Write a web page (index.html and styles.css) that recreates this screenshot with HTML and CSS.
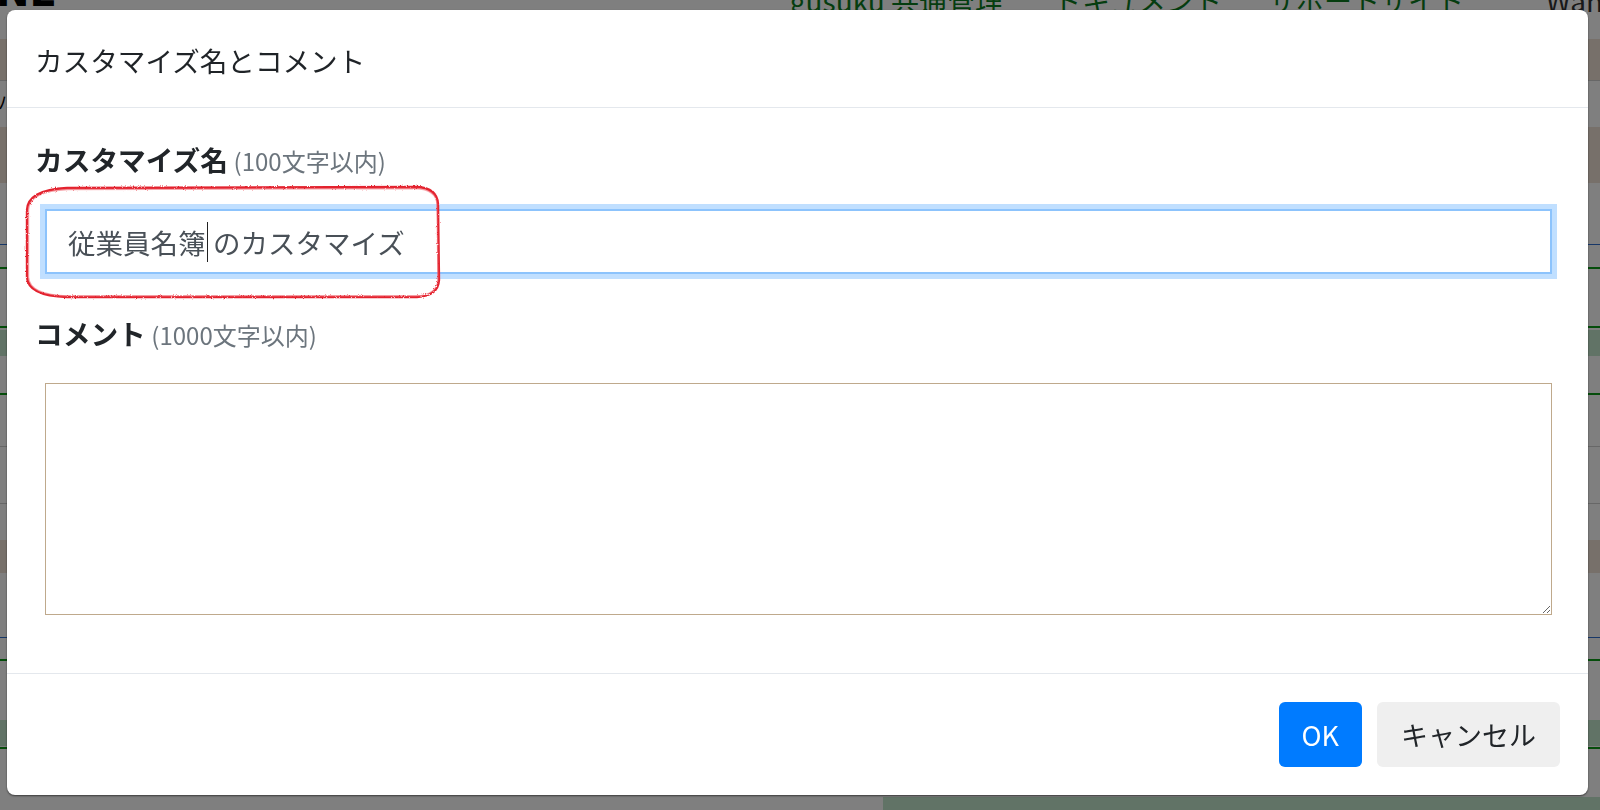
FILE: index.html
```html
<!DOCTYPE html>
<html lang="ja">
<head>
<meta charset="utf-8">
<title>カスタマイズ名とコメント</title>
<link rel="stylesheet" href="styles.css">
</head>
<body>
<div class="page">
  <header class="topbar">
    <div class="logo">NE</div>
    <nav class="nav">
      <a class="nav-link">gusuku 共通管理</a>
      <a class="nav-link">ドキュメント</a>
      <a class="nav-link">サポートサイト</a>
      <span class="nav-user">Wan</span>
    </nav>
  </header>
  <div class="rows">
    <div class="row row-a beige line-gray"></div>
    <div class="row row-b"><span class="row-text">パ</span></div>
    <div class="row row-c beige"></div>
    <div class="row row-d line-blue"></div>
    <div class="row row-e line-green"></div>
    <div class="row row-f line-green"></div>
    <div class="row row-g line-green"><span class="band band-g"></span></div>
    <div class="row row-h line-gray"></div>
    <div class="row row-i line-gray"></div>
    <div class="row row-j"></div>
    <div class="row row-k beige"></div>
    <div class="row row-l line-blue"></div>
    <div class="row row-m line-green"></div>
    <div class="row row-n line-green"><span class="band band-n"></span></div>
    <div class="row row-o"></div>
    <div class="row row-p"><span class="band band-p"></span></div>
  </div>
</div>

<div class="overlay">
  <div class="modal">
    <div class="modal-header">
      <h5 class="modal-title">カスタマイズ名とコメント</h5>
    </div>
    <div class="modal-body">
      <div class="form-group">
        <label class="label"><span class="label-main">カスタマイズ名</span> <span class="label-note">(100文字以内)</span></label>
        <div class="input is-focused"><span>従業員名簿</span><span class="caret"></span><span>のカスタマイズ</span></div>
      </div>
      <div class="form-group">
        <label class="label"><span class="label-main">コメント</span> <span class="label-note">(1000文字以内)</span></label>
        <textarea class="textarea"></textarea>
      </div>
    </div>
    <div class="modal-footer">
      <button class="btn btn-primary">OK</button>
      <button class="btn btn-light">キャンセル</button>
    </div>
    <svg class="annotation" width="430" height="126" viewBox="0 0 430 126">
      <defs>
        <filter id="rough" x="-5%" y="-5%" width="110%" height="110%">
          <feTurbulence type="fractalNoise" baseFrequency="0.9" numOctaves="2" seed="3" result="n"/>
          <feDisplacementMap in="SourceGraphic" in2="n" scale="2.5"/>
        </filter>
      </defs>
      <path filter="url(#rough)" d="M 47 8 L 397 7 Q 417 8 418 24 L 419 100 Q 418 116 397 117 L 47 117 Q 8 116 7 97 L 7 30 Q 8 10 47 8 Z" fill="none" stroke="#e3232f" stroke-width="2.4"/>
      <path filter="url(#rough)" d="M 48 9.5 L 396 8.5 Q 416 9.5 417 24 L 418 100 Q 417 115 396 116 L 48 116 Q 9.5 115 8.5 97 L 8.5 30 Q 9.5 11 48 9.5 Z" fill="none" stroke="#f0606a" stroke-width="1.4" opacity="0.55"/>
    </svg>
  </div>
</div>
</body>
</html>
```

FILE: styles.css
```css
* {
  box-sizing: border-box;
}

html,
body {
  margin: 0;
  padding: 0;
}

body {
  width: 1600px;
  height: 810px;
  overflow: hidden;
  background: #ffffff;
  font-family: "Noto Sans CJK JP", "Noto Sans", sans-serif;
  color: #212529;
}

/* ---------- background page ---------- */
.page {
  width: 1600px;
  height: 810px;
  display: flex;
  flex-direction: column;
}

.topbar {
  height: 39px;
  display: flex;
  align-items: flex-start;
  justify-content: space-between;
  overflow: hidden;
}

.logo {
  font-family: "DejaVu Sans", sans-serif;
  font-weight: 700;
  font-size: 40px;
  line-height: 40px;
  margin-top: -28px;
  margin-left: -4px;
  color: #000;
}

.nav {
  display: flex;
  gap: 46px;
  margin-top: -14px;
  margin-right: -3px;
  font-size: 28px;
  line-height: 28px;
}

.nav-link {
  color: #0b7a1e;
}

.nav-link:first-child {
  margin-right: 5px;
}

.nav-user {
  color: #333;
  margin-left: 36px;
}

.rows {
  display: flex;
  flex-direction: column;
}

.row {
  position: relative;
  flex: none;
}

.beige {
  background: #efe1d4;
}

.line-gray {
  border-bottom: 1px solid #cfcfcf;
}

.line-blue {
  border-bottom: 1px solid #2f6fd0;
}

.line-green {
  border-bottom: 2px solid #0a9a16;
}

.row-a { height: 42px; }
.row-b { height: 46px; }
.row-c { height: 56px; }
.row-d { height: 62px; }
.row-e { height: 24px; }
.row-f { height: 59px; }
.row-g { height: 67px; }
.row-h { height: 52px; }
.row-i { height: 57px; }
.row-j { height: 36px; }
.row-k { height: 33px; }
.row-l { height: 65px; }
.row-m { height: 23px; }
.row-n { height: 88px; }
.row-o { height: 48px; }
.row-p { height: 13px; }

.row-text {
  display: block;
  margin-left: -2px;
  padding-top: 10px;
  font-size: 18px;
  line-height: 20px;
  color: #000;
}

.band {
  display: block;
  background: #c2e6cc;
}

.band-g {
  margin-top: 2px;
  height: 26px;
}

.band-n {
  margin-top: 59px;
  height: 26px;
}

.band-p {
  margin-left: 883px;
  height: 13px;
}

/* ---------- overlay / modal ---------- */
.overlay {
  position: fixed;
  inset: 0;
  background: rgba(0, 0, 0, 0.5);
  padding: 10px 12px 15px 7px;
}

.modal {
  position: relative;
  height: 785px;
  background: #ffffff;
  border-radius: 8px;
  box-shadow: 0 1px 2px rgba(0, 0, 0, 0.55);
  display: flex;
  flex-direction: column;
}

.modal-header {
  height: 98px;
  flex: none;
  display: flex;
  align-items: center;
  padding: 2px 28px 0;
  border-bottom: 1px solid #e4e8ed;
}

.modal-title {
  margin: 0;
  font-size: 27.6px;
  font-weight: 400;
  line-height: 40px;
  color: #1f2327;
}

.modal-body {
  flex: 1;
  padding: 31px 36px 0 28px;
}

.form-group {
  margin-bottom: 39px;
}

.label {
  display: block;
  height: 40px;
  line-height: 40px;
  margin-bottom: 30px;
  white-space: nowrap;
}

.label-main {
  font-size: 27.7px;
  font-weight: 700;
  color: #212529;
  margin-right: 2px;
}

.label-note {
  font-size: 24px;
  font-weight: 400;
  color: #6c757d;
}

.input {
  margin-left: 10px;
  height: 65px;
  display: flex;
  align-items: center;
  padding-left: 21px;
  border: 2px solid #8cc3fc;
  background: #fff;
  font-size: 27.5px;
  line-height: 40px;
  color: #495057;
  white-space: nowrap;
}

.input.is-focused {
  box-shadow: 0 0 0 5px #c0dfff;
}

.caret {
  display: inline-block;
  width: 1.5px;
  height: 40px;
  margin: 0 5px 0 1px;
  background: #222;
}

.textarea {
  display: block;
  margin: 0 0 0 10px;
  width: calc(100% - 10px);
  height: 232px;
  border: 1px solid #bfa98c;
  border-radius: 0;
  padding: 8px 12px;
  font-family: inherit;
  font-size: 27px;
  resize: vertical;
  outline: none;
  background: #fff;
}

.modal-footer {
  height: 122px;
  flex: none;
  display: flex;
  justify-content: flex-end;
  align-items: center;
  gap: 15px;
  padding: 0 28px 0 0;
  border-top: 1px solid #e4e8ed;
}

.btn {
  height: 65px;
  padding: 0 24px;
  border: none;
  border-radius: 6px;
  font-family: inherit;
  font-size: 27px;
  line-height: 40px;
  cursor: pointer;
}

.btn-primary {
  background: #007bff;
  color: #ffffff;
  padding: 0 23px;
}

.btn-light {
  background: #efefef;
  color: #212529;
}

.annotation {
  position: absolute;
  left: 13px;
  top: 170px;
  pointer-events: none;
}
```
